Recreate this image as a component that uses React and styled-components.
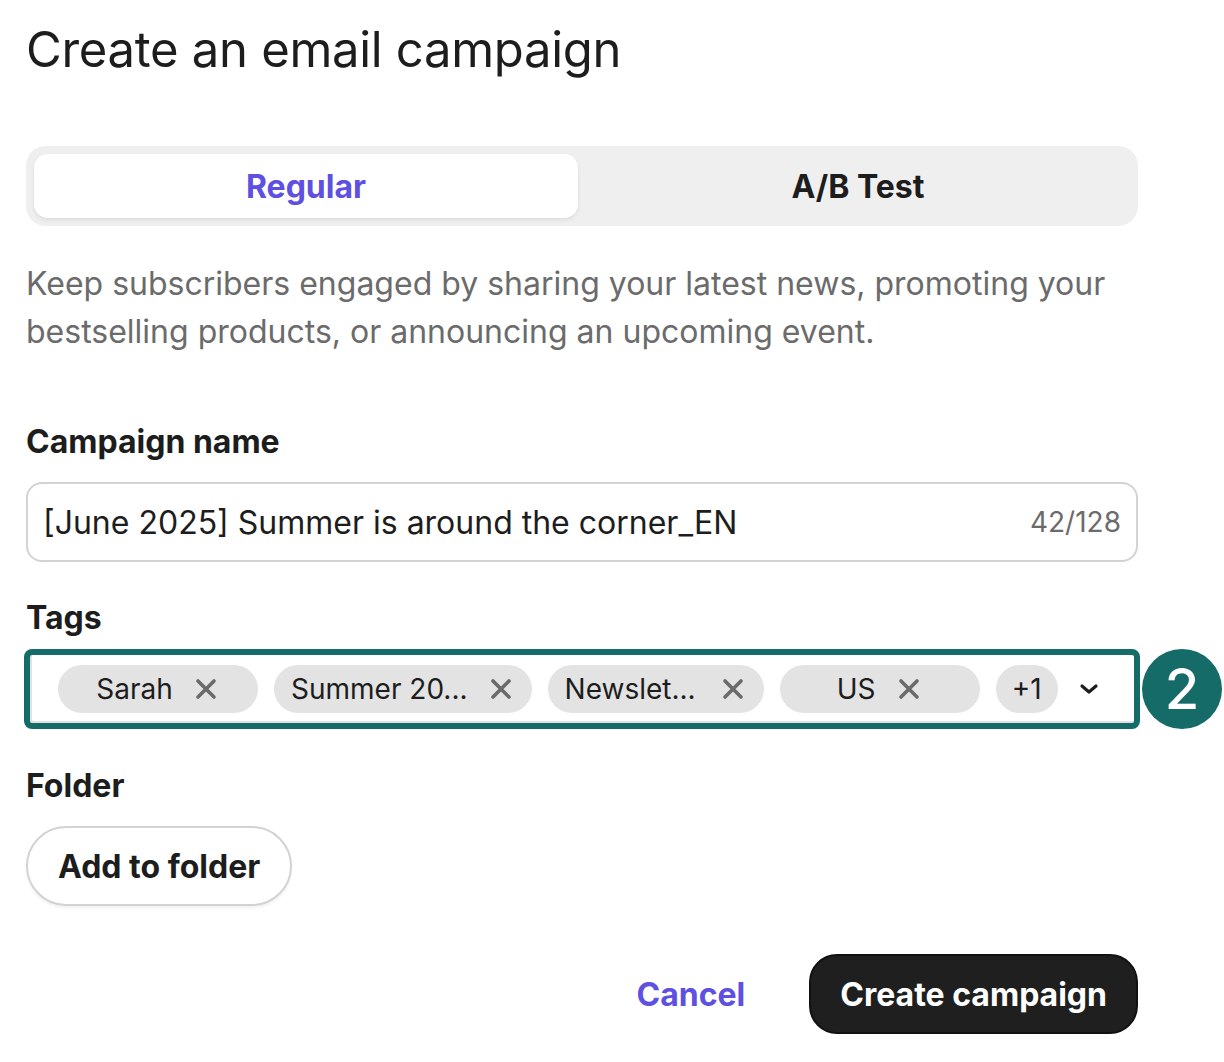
import React from "react";
import styled, { createGlobalStyle } from "styled-components";

const GlobalStyle = createGlobalStyle`
    body {
        margin: 0;
        background: #fff;
        font-family: Inter, "Noto Sans", sans-serif;
        color: #1d1d1d;
    }
`;

const Page = styled.div`
    width: 1112px;
    padding: 20px 0 0 26px;
`;

const Title = styled.h1`
    margin: 0;
    font-size: 49px;
    font-weight: 400;
    letter-spacing: -0.3px;
    line-height: 60px;
`;

const Segmented = styled.div`
    margin-top: 66px;
    height: 80px;
    box-sizing: border-box;
    padding: 8px;
    border-radius: 20px;
    background: #efefef;
    display: grid;
    grid-template-columns: 1fr 1fr;
    gap: 8px;
`;

const Segment = styled.div`
    display: flex;
    align-items: center;
    justify-content: center;
    border-radius: 14px;
    font-size: 32px;
    font-weight: 700;
    color: ${(p) => (p.$active ? "#5e50e0" : "#1d1d1d")};
    background: ${(p) => (p.$active ? "#fff" : "transparent")};
    box-shadow: ${(p) => (p.$active ? "0 2px 4px rgba(0,0,0,0.08)" : "none")};
`;

const Description = styled.p`
    margin: 34px 0 0;
    font-size: 32px;
    line-height: 48px;
    color: #6b6b6b;
`;

const Label = styled.div`
    font-size: 32px;
    font-weight: 700;
    line-height: 36px;
    margin-top: ${(p) => p.$top}px;
    margin-bottom: ${(p) => p.$bottom}px;
`;

const InputBox = styled.div`
    height: 80px;
    box-sizing: border-box;
    border: 2px solid #d3d3d3;
    border-radius: 16px;
    display: flex;
    align-items: center;
    justify-content: space-between;
    padding: 0 15px;
    font-size: 32px;
`;

const Counter = styled.span`
    color: #6b6b6b;
    font-size: 28px;
`;

const TagsField = styled.div`
    position: relative;
`;

const TagsBox = styled.div`
    margin-left: -2px;
    width: 1116px;
    height: 80px;
    box-sizing: border-box;
    border: 6px solid #146b68;
    border-radius: 8px;
    box-shadow: inset 2px -2px 0 #e2e2e2;
    display: flex;
    align-items: center;
    gap: 16px;
    padding: 0 0 0 28px;
`;

const Chip = styled.div`
    height: 48px;
    min-width: ${(p) => p.$min || 0}px;
    box-sizing: border-box;
    border-radius: 24px;
    background: #e3e3e3;
    display: flex;
    align-items: center;
    justify-content: center;
    gap: ${(p) => p.$gap || 22}px;
    padding: ${(p) => p.$pad || "0 20px 0 17px"};
    font-size: 28px;
    color: #1d1d1d;
`;

const Chevron = styled.div`
    display: flex;
    align-items: center;
    margin-left: 2px;
`;

const Badge = styled.div`
    position: absolute;
    left: 1116px;
    top: 0;
    width: 80px;
    height: 80px;
    border-radius: 50%;
    background: #146b68;
    color: #fff;
    font-size: 56px;
    font-weight: 500;
    display: flex;
    align-items: center;
    justify-content: center;
`;

const FolderButton = styled.button`
    height: 80px;
    padding: 0 30px;
    border: 2px solid #d3d3d3;
    border-radius: 40px;
    background: #fff;
    box-shadow: 0 2px 3px rgba(0,0,0,0.06);
    font-family: inherit;
    font-size: 32px;
    font-weight: 700;
    color: #1d1d1d;
`;

const Footer = styled.div`
    margin-top: 48px;
    display: flex;
    justify-content: flex-end;
    align-items: center;
    gap: 64px;
`;

const CancelLink = styled.span`
    font-size: 32px;
    font-weight: 700;
    color: #5e50e0;
`;

const PrimaryButton = styled.button`
    height: 80px;
    padding: 0 29px;
    border: 2px solid #111;
    border-radius: 28px;
    background: #1f1f1f;
    color: #fff;
    font-family: inherit;
    font-size: 32px;
    font-weight: 700;
`;

const CloseIcon = () => (
    <svg width="22" height="22" viewBox="0 0 22 22">
        <path d="M3 3 L19 19 M19 3 L3 19" stroke="#6a6a6a" strokeWidth="3.6" strokeLinecap="round" />
    </svg>
);

const tags = [
    { name: "Sarah", min: 200 },
    { name: "Summer 20...", min: 200 },
    { name: "Newslet...", min: 200, gap: 26 },
    { name: "US", min: 200 },
];

export default function App() {
    return (
        <Page>
            <GlobalStyle />
            <Title>Create an email campaign</Title>
            <Segmented>
                <Segment $active>Regular</Segment>
                <Segment>A/B Test</Segment>
            </Segmented>
            <Description>
                Keep subscribers engaged by sharing your latest news, promoting your
                bestselling products, or announcing an upcoming event.
            </Description>

            <Label $top={68} $bottom={22}>Campaign name</Label>
            <InputBox>
                <span>[June 2025] Summer is around the corner_EN</span>
                <Counter>42/128</Counter>
            </InputBox>

            <Label $top={38} $bottom={13}>Tags</Label>
            <TagsField>
                <TagsBox>
                    {tags.map((t) => (
                        <Chip key={t.name} $min={t.min} $gap={t.gap}>
                            <span>{t.name}</span>
                            <CloseIcon />
                        </Chip>
                    ))}
                    <Chip $pad="0 16px">+1</Chip>
                    <Chevron>
                        <svg width="26" height="26" viewBox="0 0 26 26">
                            <path d="M6 10 L13 16 L20 10" fill="none" stroke="#1d1d1d" strokeWidth="3.2" strokeLinecap="round" strokeLinejoin="round" />
                        </svg>
                    </Chevron>
                </TagsBox>
                <Badge>2</Badge>
            </TagsField>

            <Label $top={39} $bottom={22}>Folder</Label>
            <FolderButton>Add to folder</FolderButton>

            <Footer>
                <CancelLink>Cancel</CancelLink>
                <PrimaryButton>Create campaign</PrimaryButton>
            </Footer>
        </Page>
    );
}
